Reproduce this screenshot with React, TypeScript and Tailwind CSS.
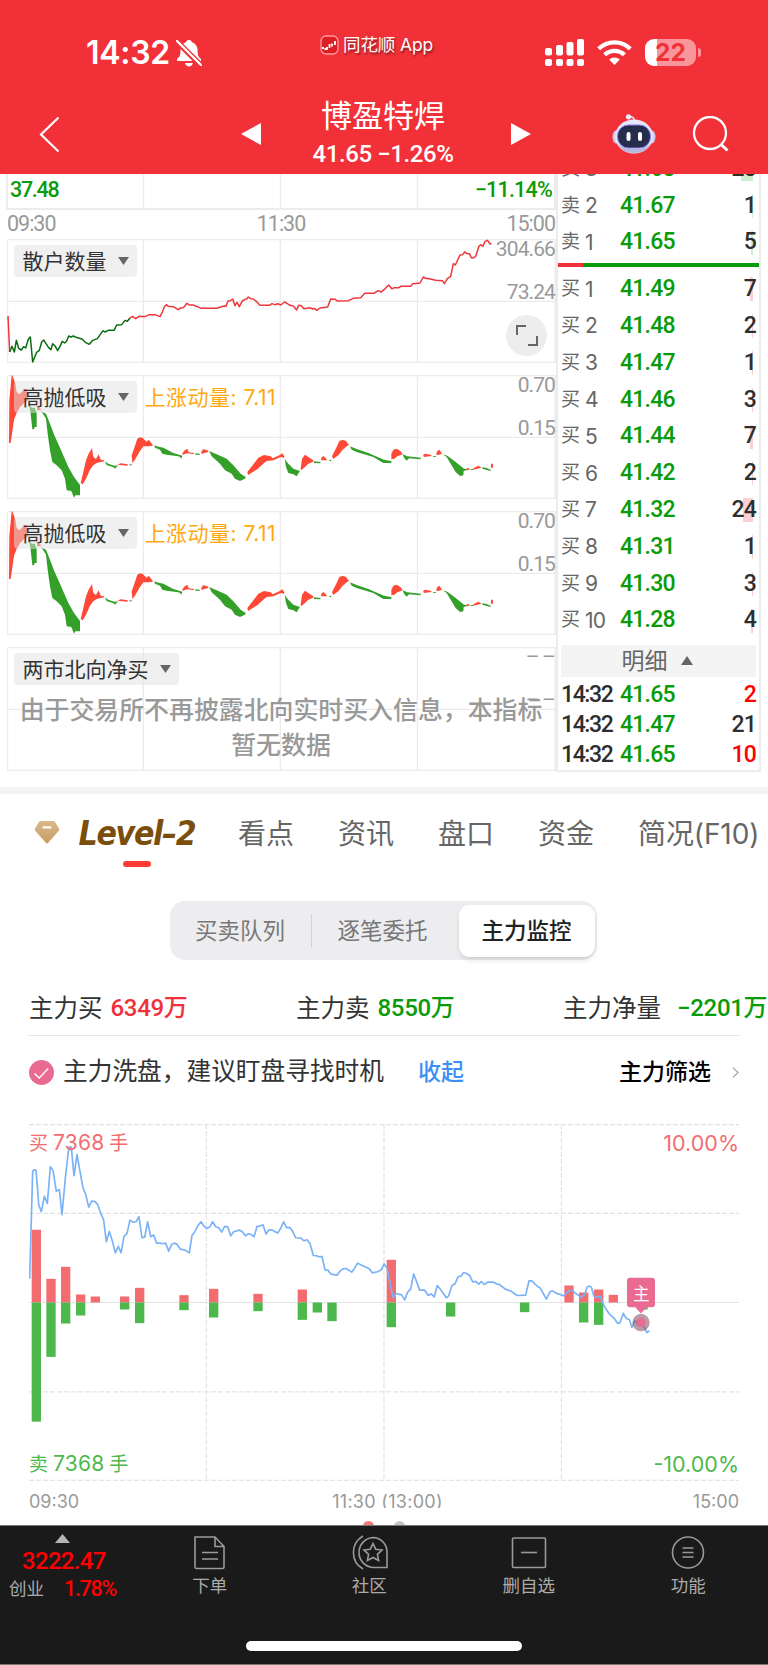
import type { ReactNode } from 'react'

const din = "font-[family-name:Roboto,'Noto_Sans_CJK_SC',sans-serif]"
const sans = "font-[family-name:Inter,'Noto_Sans_CJK_SC',sans-serif]"

interface Quote { label: string; level: number; price: string; qty: string; depth: number }

const asks: Quote[] = [
  { label: '卖', level: 3, price: '41.68', qty: '28', depth: 12 },
  { label: '卖', level: 2, price: '41.67', qty: '1', depth: 1 },
  { label: '卖', level: 1, price: '41.65', qty: '5', depth: 2 },
]

const bids: Quote[] = [
  { label: '买', level: 1, price: '41.49', qty: '7', depth: 3 },
  { label: '买', level: 2, price: '41.48', qty: '2', depth: 1 },
  { label: '买', level: 3, price: '41.47', qty: '1', depth: 1 },
  { label: '买', level: 4, price: '41.46', qty: '3', depth: 1 },
  { label: '买', level: 5, price: '41.44', qty: '7', depth: 3 },
  { label: '买', level: 6, price: '41.42', qty: '2', depth: 1 },
  { label: '买', level: 7, price: '41.32', qty: '24', depth: 10 },
  { label: '买', level: 8, price: '41.31', qty: '1', depth: 1 },
  { label: '买', level: 9, price: '41.30', qty: '3', depth: 1 },
  { label: '买', level: 10, price: '41.28', qty: '4', depth: 2 },
]

const trades = [
  { time: '14:32', price: '41.65', qty: '2', color: 'text-[#ff0000]' },
  { time: '14:32', price: '41.47', qty: '21', color: 'text-[#2e2e2e]' },
  { time: '14:32', price: '41.65', qty: '10', color: 'text-[#ff0000]' },
]

// [x, top of buy bar, bottom of sell bar], zero line is 608
const bars = [
  [95, 390, 965], [139, 537, 771], [183, 501, 671], [228, 584, 647], [272, 590, 608],
  [360, 590, 629], [405, 564, 670], [538, 586, 631], [627, 567, 653], [760, 582, 634],
  [893, 569, 660], [938, 608, 638], [982, 608, 664], [1160, 480, 682], [1338, 608, 650],
  [1560, 608, 637], [1693, 557, 608], [1737, 578, 668], [1782, 569, 675], [1826, 585, 608],
  [1915, 608, 629],
]

const priceLine =
  '89,537 98,214 103,210 108,212 113,270 116,315 124,336 133,290 142,311 151,201 159,212 169,275 178,269 186,345 196,235 205,155 210,141 214,143 222,228 231,165 240,215 249,265 257,283 266,322 275,304 284,305 293,314 302,340 311,361 319,426 328,395 337,424 346,459 355,440 363,459 372,410 381,401 390,361 399,367 408,366 417,351 426,414 434,412 443,366 452,411 461,406 470,430 480,430 488,432 497,430 506,454 515,434 522,430 530,433 541,448 555,451 568,459 576,407 585,395 593,379 603,366 613,380 620,386 629,382 638,366 647,381 656,384 665,397 674,380 683,381 692,408 701,396 718,391 727,396 736,408 745,402 753,404 762,411 771,380 780,379 789,375 798,403 807,390 816,391 833,400 842,386 851,366 860,384 869,383 878,394 887,414 903,415 912,423 921,420 930,431 940,467 949,468 957,471 966,470 975,510 984,511 993,523 1011,526 1020,514 1029,507 1038,506 1055,517 1064,505 1073,490 1082,495 1108,507 1117,519 1133,516 1144,510 1152,492 1161,505 1170,549 1179,594 1188,581 1205,585 1214,600 1223,577 1232,568 1241,522 1259,571 1274,571 1285,587 1294,582 1303,591 1312,557 1321,568 1339,594 1346,588 1356,557 1365,552 1374,531 1383,529 1391,518 1400,521 1409,527 1418,546 1427,545 1436,553 1444,545 1453,554 1463,547 1480,547 1489,552 1498,554 1516,568 1533,574 1551,587 1577,586 1587,543 1595,543 1613,560 1621,565 1639,598 1650,576 1657,573 1668,580 1691,588 1709,572 1718,572 1727,581 1744,592 1753,585 1762,561 1769,559 1774,562 1782,589 1791,593 1800,589 1812,618 1827,641 1844,657 1853,671 1860,669 1870,640 1879,656 1888,659 1896,683 1905,662 1914,676 1922,661 1931,680 1941,698 1948,692'

const retailGreen =
  '29,545 36,528 43,545 49,510 56,534 64,539 71,529 77,533 85,507 91,500 98,575 110,546 118,540 125,515 131,509 138,520 146,532 153,538 158,520 166,528 173,541 180,528 187,513 194,518 200,512 206,497 213,500 220,497 228,501 246,506 256,516 268,522 278,510 292,505 309,481 315,485 325,480 342,480 350,464 365,463 375,450 382,453 390,443'

const retailRed =
  '390,443 397,438 407,445 417,438 435,439 448,433 465,433 480,439 487,425 494,408 499,403 505,408 520,409 534,418 542,413 550,412 561,399 568,404 580,404 604,414 650,414 672,407 678,408 684,392 691,391 698,386 705,406 711,396 718,409 727,392 735,387 740,386 745,380 752,385 760,386 770,394 780,405 808,405 816,400 824,403 834,400 842,404 854,395 862,400 870,405 880,407 890,419 896,405 904,406 912,415 930,412 938,416 943,414 950,420 960,413 983,410 992,386 1006,387 1012,392 1045,391 1060,384 1082,382 1094,369 1122,369 1134,361 1144,365 1152,358 1166,344 1176,356 1182,352 1197,352 1202,348 1232,348 1238,340 1260,338 1270,320 1277,324 1287,325 1307,330 1327,331 1333,340 1342,325 1352,318 1360,280 1366,284 1380,254 1388,253 1394,245 1402,250 1408,250 1414,262 1420,263 1427,258 1437,228 1442,223 1449,228 1455,213 1462,210 1470,220 1475,220'

const swingRed = [
  '27,818 28,690 35,614 38,617 46,640 50,665 58,672 66,665 72,655 80,656 84,690 70,700 60,710 50,728 42,748 36,790 32,818',
  '110,705 118,712 124,720 112,720',
  '242,938 250,905 258,870 266,850 276,833 280,860 288,866 296,852 302,868 312,870 312,873 290,878 280,885 270,898 258,925 248,942',
  '355,882 362,879 383,882 383,886 355,884',
  '395,855 402,835 412,805 420,801 428,803 440,814 446,808 458,823 458,826 445,828 430,828 418,845 405,868 397,878',
  '547,850 552,842 562,835 566,846 582,848 582,851 560,849 548,854',
  '603,846 610,836 625,841 625,845 605,850',
  '742,905 760,882 775,862 792,854 812,858 818,864 838,855 847,849 854,860 852,862 842,860 820,870 800,872 790,880 770,898 744,914',
  '902,895 906,865 915,853 925,860 940,870 940,874 925,880 915,890 903,900',
  '963,870 964,862 971,857 980,867 980,870',
  '996,858 1010,830 1018,812 1028,808 1038,812 1047,824 1040,828 1028,838 1015,855 1000,866',
  '1174,850 1180,838 1190,835 1202,843 1208,852 1192,858 1182,866 1174,866',
  '1269,853 1277,850 1294,854 1294,857 1272,860',
  '1309,850 1312,842 1318,838 1326,851 1310,855',
  '1398,896 1404,893 1412,897 1400,900',
  '1420,894 1435,886 1445,892 1420,898',
  '1473,880 1479,880 1479,892 1473,892',
]

const swingGreen = [
  '88,705 96,712 104,712 110,727 110,770 104,770 102,777 97,777 92,730',
  '122,722 138,730 150,760 163,795 178,828 192,860 205,890 222,920 240,944 240,975 226,975 222,982 214,962 200,960 195,925 185,900 170,885 157,875 150,840 143,790 138,745 130,732',
  '314,873 325,880 343,886 354,885 345,895 340,891 320,884',
  '388,882 396,882 396,885 388,885',
  '463,824 470,828 490,832 520,848 547,856 545,864 535,858 500,853 487,850 480,838 465,832',
  '586,849 600,850 600,853 586,853',
  '627,842 650,852 680,865 700,885 722,910 737,920 735,925 720,932 705,925 695,910 675,900 660,880 635,858',
  '854,866 865,880 880,895 900,902 890,918 880,912 865,908 858,890',
  '942,873 962,875 960,879 942,878',
  '985,868 995,869 992,873',
  '1050,828 1070,836 1105,848 1152,868 1174,872 1174,878 1150,878 1120,860 1070,845 1055,838',
  '1208,852 1222,858 1262,862 1262,867 1227,864 1220,871 1212,862',
  '1297,857 1309,857 1305,861',
  '1328,852 1342,856 1367,875 1392,895 1400,897 1400,900 1391,902 1390,915 1380,917 1367,905 1352,880 1340,860',
  '1412,896 1420,896 1420,899 1412,899',
  '1447,891 1460,893 1472,898 1472,902 1447,895',
]

function Grid({ top }: { top: number }) {
  return (
    <g stroke="#ececec" strokeWidth="4" fill="none">
      <path d={`M22 ${top + 1}H1666V${top + 371}H22Z`} strokeWidth="5" />
      <path d={`M430 ${top}v372M841 ${top}v372M1252 ${top}v372M22 ${top + 187}H1666`} />
    </g>
  )
}

function Panel({ top, chart, children }: { top: number; chart?: ReactNode; children: ReactNode }) {
  return (
    <section className="relative mb-[12px] ml-[7px] h-[124px] w-[549px]">
      <svg className="absolute inset-0 h-full w-full" viewBox={`21 ${top} 1647 372`} preserveAspectRatio="none">
        <Grid top={top} />
        {chart}
      </svg>
      <div className="relative h-full">{children}</div>
    </section>
  )
}

function Pill({ text }: { text: string }) {
  return (
    <button className="flex h-8 items-center gap-[11px] rounded bg-[#e2e2e2]/50 pr-2 pl-[9px] text-[21px] leading-none text-[#333]">
      {text}
      <svg className="h-[8px] w-[11px]" viewBox="0 0 11 8"><path d="M0 0h11L5.500 8z" fill="#666" /></svg>
    </button>
  )
}

function AxisValues({ values }: { values: string[] }) {
  return (
    <div className={`${din} absolute top-[-5px] right-px flex flex-col items-end gap-[13px] text-[21px] leading-[30px] tracking-[-0.9px] text-[#999]`}>
      {values.map((v, i) => <span key={i}>{v}</span>)}
    </div>
  )
}

function SwingPanel() {
  return (
    <Panel
      top={614}
      chart={
        <>
          {swingRed.map(p => <polygon key={p} points={p} fill="#ff4836" />)}
          {swingGreen.map(p => <polygon key={p} points={p} fill="#349f29" />)}
        </>
      }
    >
      <div className="flex items-center gap-2 pt-[6px] pl-[6.5px]">
        <Pill text="高抛低吸" />
        <span className="text-[21px] leading-none tracking-[0.5px] text-[#ffa80f]">上涨动量: 7.11</span>
      </div>
      <AxisValues values={['0.70', '0.15']} />
    </Panel>
  )
}

function QuoteRow({ q, side }: { q: Quote; side: 'ask' | 'bid' }) {
  return (
    <div className="flex h-[36.8px] shrink-0 items-center pr-[3px] pl-[3px]">
      <span className="flex w-[59px] items-center gap-[5px] text-[19px] text-[#666]">
        {q.label}
        <b className="text-[21px] font-normal tracking-[-0.8px]">{q.level}</b>
      </span>
      <span className={`${din} flex-1 text-[23px] font-medium tracking-[-0.8px] text-[#0a9b0a]`}>{q.price}</span>
      <span className="relative">
        <i
          className={`absolute top-1/2 right-[3px] h-6 -translate-y-1/2 ${side === 'ask' ? 'bg-[#cdeecd]' : 'bg-[#fbd0d2]'}`}
          style={{ width: q.depth }}
        />
        <span className={`${din} relative text-[23px] font-medium tracking-[-0.8px] text-[#2e2e2e]`}>{q.qty}</span>
      </span>
    </div>
  )
}

function Header() {
  return (
    <header className="relative z-10 h-[174px] bg-[#f23038] text-white">
      <div className="flex h-[98px] items-center">
        <span className="ml-[86px] w-[90px] pt-[7px] text-[32px] leading-none font-semibold tracking-[-0.3px]">14:32</span>
        <svg className="mt-[7px] h-[28px] w-[26px]" viewBox="0 0 26 28">
          <path d="M13 1c1.700 0 2.800 1 3 2.300 3.800 1.300 5.600 4.500 5.600 8.200 0 5 1 6.500 3.400 8.500v2H1v-2c2.500-2 3.500-3.500 3.500-8.500C4.500 7.800 6.200 4.600 10 3.300 10.200 2 11.300 1 13 1zM9 24h8c-.5 2-2 3.400-4 3.400S9.500 26 9 24z" fill="#fff" />
          <path d="M0 1.500l26 26" stroke="#f23038" strokeWidth="5.500" />
          <path d="M1 2l24 24" stroke="#fff" strokeWidth="2.300" strokeLinecap="round" />
        </svg>
        <div className="mb-[8px] ml-[118px] flex w-[122px] items-center gap-1">
          <svg className="h-[20px] w-[19px] shrink-0" viewBox="0 0 19 20">
            <rect x="1" y="1" width="17" height="18" rx="5" fill="#dc1f26" stroke="#ff9a9a" strokeWidth="1.300" />
            <path d="M2 13h2M4.500 14h2M7 12v3M9.500 9v4M12 8.500v3M15 6v4" stroke="#fff" strokeWidth="1.800" fill="none" />
          </svg>
          <span className="text-[17.5px] leading-[26px] tracking-[-0.1px] whitespace-nowrap [text-shadow:1px_2px_2px_rgba(0,0,0,0.45)]">同花顺 App</span>
        </div>
        <div className="mt-[6px] ml-[103px] flex items-center">
          <svg className="h-[27px] w-[39px]" viewBox="0 0 39 27" fill="#fff">
            <rect y="9" width="7" height="7.500" rx="2" />
            <rect x="11" y="6" width="7" height="10.500" rx="2" />
            <rect x="21.500" y="3" width="7" height="13.500" rx="2" />
            <rect x="32" width="7" height="16.500" rx="2" />
            <rect y="20" width="7" height="7" rx="2" />
            <rect x="11" y="20" width="7" height="7" rx="2" />
            <rect x="21.500" y="20" width="7" height="7" rx="2" />
            <rect x="32" y="20" width="7" height="7" rx="2" />
          </svg>
          <svg className="ml-[13px] h-[25px] w-[35px]" viewBox="0 0 35 25" fill="none" stroke="#fff" strokeWidth="4.200">
            <path d="M1.700 8.800a22.500 22.500 0 0 1 31.600 0" />
            <path d="M7.600 14.800a14.200 14.200 0 0 1 19.800 0" />
            <path d="M17.500 25l-5.300-5.400a7.600 7.600 0 0 1 10.600 0z" fill="#fff" stroke="none" />
          </svg>
          <div className="ml-[13px] flex h-[27px] w-[51px] items-center justify-center rounded-[9px] bg-linear-to-r from-white from-[23%] to-[#f8969b] to-[23%] text-[24.500px] leading-[27px] font-bold text-[#f23038]">
            22
          </div>
          <i className="ml-[1.5px] h-[9px] w-[3.500px] rounded-r-full bg-[#f8969b]" />
        </div>
      </div>
      <div className="flex h-[76px] items-start">
        <svg className="mt-[18px] ml-[39px] h-[37px] w-[21px]" viewBox="0 0 21 37"><path d="M19.500 1.500L2 18.500l17.500 17" stroke="#fff" strokeWidth="2.200" fill="none" /></svg>
        <svg className="mt-[25px] ml-[181px] h-[22px] w-5" viewBox="0 0 20 22"><path d="M20 0v22L0 11z" fill="#fff" /></svg>
        <div className="ml-[36px] flex w-[172px] flex-col items-center">
          <h1 className="-mt-px text-[31px] leading-[38px] whitespace-nowrap">博盈特焊</h1>
          <p className={`${din} mt-px text-[24px] leading-[36px] font-medium tracking-[-0.4px] whitespace-nowrap`}>41.65 −1.26%</p>
        </div>
        <svg className="mt-[25px] ml-[42px] h-[22px] w-5" viewBox="0 0 20 22"><path d="M0 0v22l20-11z" fill="#fff" /></svg>
        <svg className="mt-[16px] ml-[81px] h-[40px] w-[44px]" viewBox="0 0 44 40">
          <circle cx="16.500" cy="2.800" r="2.600" fill="#e9ecfb" />
          <path d="M17 2.500q5 0 5.500 4" stroke="#e9ecfb" strokeWidth="1.600" fill="none" />
          <ellipse cx="4" cy="23" rx="3.500" ry="6.500" fill="#c9cdf0" />
          <ellipse cx="40" cy="23" rx="3.500" ry="6.500" fill="#c9cdf0" />
          <ellipse cx="22" cy="22.500" rx="19" ry="17" fill="#e6e8fa" />
          <path d="M5 29q5 10 17 10t17-10q-6 6-17 6T5 29z" fill="#b6b9de" />
          <rect x="5.500" y="11" width="33" height="23" rx="11" fill="#262c4c" stroke="#8f7ff0" />
          <rect x="14.500" y="18" width="4" height="9" rx="2" fill="#fff" />
          <rect x="26" y="18" width="4" height="9" rx="2" fill="#fff" />
        </svg>
        <svg className="mt-[18px] ml-[36px] h-[37px] w-[37px]" viewBox="0 0 37 37" fill="none" stroke="#fff" strokeWidth="2.300">
          <circle cx="18" cy="17" r="16" />
          <path d="M28.500 28l7 6.500" strokeWidth="3" />
        </svg>
      </div>
    </header>
  )
}

function Charts() {
  return (
    <div className="w-[556px]">
      <div className="relative ml-[6px] flex h-[36px] w-[550px] justify-between border-x-2 border-b-2 border-[#ececec]">
        <svg className="absolute inset-0 h-full w-full" viewBox="0 0 546 34" preserveAspectRatio="none">
          <path d="M135.500 0v34M272.500 0v34M409.500 0v34" stroke="#ececec" strokeWidth="1.300" />
        </svg>
        <span className={`${din} relative pl-[2px] text-[21.5px] leading-[32px] font-medium tracking-[-1.3px] text-[#0a9b0a]`}>37.48</span>
        <span className={`${din} relative pr-[2px] text-[21.5px] leading-[32px] font-medium tracking-[-0.8px] text-[#0a9b0a]`}>−11.14%</span>
      </div>
      <div className={`${din} flex h-[29px] items-center justify-between pr-px pl-[7px] text-[21.5px] tracking-[-1px] text-[#999]`}>
        <span>09:30</span>
        <span>11:30</span>
        <span>15:00</span>
      </div>
      <Panel
        top={206}
        chart={
          <g fill="none" strokeWidth="4.500" strokeLinejoin="round">
            <polyline points="24,437 29,545" stroke="#f0353b" />
            <polyline points={retailGreen} stroke="#0b6b10" />
            <polyline points={retailRed} stroke="#f0353b" />
          </g>
        }
      >
        <div className="flex pt-[6px] pl-[6.5px]"><Pill text="散户数量" /></div>
        <AxisValues values={['304.66', '73.24']} />
        <button className="absolute right-[9px] bottom-[7px] flex size-[41px] items-center justify-center rounded-full bg-[#ededed]">
          <svg className="h-[21px] w-[22px]" viewBox="0 0 22 21" fill="none" stroke="#666" strokeWidth="2"><path d="M1 10V1h9M21 11v9h-9" /></svg>
        </button>
      </Panel>
      <SwingPanel />
      <SwingPanel />
      <Panel top={614}>
        <div className="flex pt-[6px] pl-[6.5px]"><Pill text="两市北向净买" /></div>
        <AxisValues values={['–\u2009–', '–\u2009–']} />
        <p className="mt-[8px] pr-px text-center text-[24.9px] leading-[34.5px] font-medium whitespace-nowrap text-[#999]">
          由于交易所不再披露北向实时买入信息，本指标<br />暂无数据
        </p>
      </Panel>
    </div>
  )
}

function OrderBook() {
  return (
    <div className="flex h-[598px] w-[205px] flex-col border-x-2 border-b-2 border-[#ececec]">
      <div className="flex h-[89px] shrink-0 flex-col justify-end overflow-hidden pb-[2px]">
        {asks.map(q => <QuoteRow key={q.level} q={q} side="ask" />)}
      </div>
      <div className="flex h-[4px] shrink-0">
        <i className="w-[25px] bg-[#f23038]" />
        <i className="flex-1 bg-[#0a9b0a]" />
      </div>
      <div className="shrink-0 pt-[4px]">
        {bids.map(q => <QuoteRow key={q.level} q={q} side="bid" />)}
      </div>
      <div className="mx-[3px] mt-[6px] flex h-8 shrink-0 items-center justify-center gap-[13px] bg-[#f4f4f4] pr-[3px] text-[23px] text-[#666]">
        明细
        <svg className="h-[9px] w-3" viewBox="0 0 12 9"><path d="M0 9h12L6 0z" fill="#666" /></svg>
      </div>
      <div className={`${din} mt-[3px] shrink-0 text-[23px] font-medium tracking-[-0.8px]`}>
        {trades.map((t, i) => (
          <div key={i} className="flex h-[30.3px] items-center px-[3px]">
            <span className="w-[59px] tracking-[-1.400px] text-[#2e2e2e]">{t.time}</span>
            <span className="flex-1 text-[#0a9b0a]">{t.price}</span>
            <span className={t.color}>{t.qty}</span>
          </div>
        ))}
      </div>
    </div>
  )
}

function Tabs() {
  return (
    <nav className="flex h-[80px] items-start pt-[18px] text-[28px] leading-[44px] whitespace-nowrap text-[#666]">
      <svg className="mt-[9px] ml-[34px] h-[23px] w-[26px]" viewBox="0 0 26 23">
        <defs>
          <linearGradient id="gem" x1="0" y1="0" x2="0" y2="1">
            <stop offset="0" stopColor="#d9b98a" />
            <stop offset="1" stopColor="#c89d62" />
          </linearGradient>
        </defs>
        <path d="M6.500 0h13q1 0 1.500.8l4 7q.6 1-.2 2L14 22q-1 1-2 0L1.200 9.800q-.8-1-.2-2l4-7Q5.500 0 6.500 0z" fill="url(#gem)" />
        <rect x="8.500" y="5.300" width="9" height="2.300" rx="1" fill="#fff" />
      </svg>
      <div className="ml-[16px] flex w-[122px] flex-col items-center">
        <span className="font-[family-name:'DejaVu_Sans_Condensed','DejaVu_Sans',sans-serif] text-[33.500px] font-bold tracking-[-1.300px] text-[#7a4f0e] italic">Level–2</span>
        <i className="mt-[5px] h-[6px] w-[28px] rounded-full bg-[#ff3b33]" />
      </div>
      <span className="ml-[40px] w-[100px]">看点</span>
      <span className="w-[100px]">资讯</span>
      <span className="w-[100px]">盘口</span>
      <span className="w-[100px]">资金</span>
      <span className="tracking-[-0.1px]">简况(F10)</span>
    </nav>
  )
}

function MoneyFlow() {
  return (
    <div className="relative ml-[29px] h-[357px] w-[710px]">
      <svg className="absolute inset-0 h-full w-full" viewBox="87 73 2130 1070" preserveAspectRatio="none">
        <g stroke="#e3e3e3" strokeWidth="3.500" fill="none" strokeDasharray="15 6">
          <path d="M87 75H2217M87 341H2217M87 876H2217M87 1141H2217M619 73V1142M1152 73V1142M1684 73V1142" />
          <path d="M87 608H2217" strokeDasharray="none" />
        </g>
        {bars.map(([x, up, down]) => (
          <g key={x}>
            <rect x={x} y={up} width="28" height={608 - up} fill="#f36d70" />
            <rect x={x} y={608} width="28" height={down - 608} fill="#4db84c" />
          </g>
        ))}
        <polyline points={priceLine} fill="none" stroke="#7ab2f7" strokeWidth="5" strokeLinejoin="round" />
        <circle cx="1923" cy="668" r="26" fill="#8a5a6e" fillOpacity="0.6" />
        <circle cx="1923" cy="668" r="14" fill="#ea6b92" />
        <path d="M1890 534h66q9 0 9 9v70q0 9-9 9h-16l-17 19-17-19h-16q-9 0-9-9v-70q0-9 9-9z" fill="#ea6b92" />
      </svg>
      <span className="absolute top-[158px] left-[604px] text-[16.500px] leading-[24px] text-white">主</span>
      <div className="relative flex h-full flex-col justify-between pt-[3.5px] pb-px text-[19px] leading-[30px]">
        <div className="flex justify-between text-[#f36d70]">
          <span>买<b className="mx-[5px] text-[21px] font-normal tracking-[0.2px]">7368</b>手</span>
          <span className="text-[21.500px]">10.00%</span>
        </div>
        <div className="flex justify-between text-[#4db84c]">
          <span>卖<b className="mx-[5px] text-[21px] font-normal tracking-[0.2px]">7368</b>手</span>
          <span className="text-[21.500px]">-10.00%</span>
        </div>
      </div>
    </div>
  )
}

function FooterItem({ label, children }: { label: string; children: ReactNode }) {
  return (
    <button className="flex w-[159.5px] flex-col items-center pt-[8px] text-[17.5px] leading-[32px] text-[#aaa]">
      <svg className="h-[36px] w-[38px]" viewBox="0 0 38 36" fill="none" stroke="#9a9a9a" strokeWidth="1.600">{children}</svg>
      {label}
    </button>
  )
}

export default function App() {
  return (
    <div className={`${sans} h-[1665px] w-[768px] overflow-hidden bg-white`}>
      <Header />
      <div className="flex h-[613px] w-[768px]">
        <Charts />
        <OrderBook />
      </div>
      <div className="h-[7px] bg-[#f3f3f3]" />
      <Tabs />
      <div className="mt-[27px] ml-[170px] flex h-[59px] w-[427px] items-center rounded-[15px] bg-[#ededf0] text-[22.5px] text-[#777]">
        <span className="w-[141px] pr-px text-center">买卖队列</span>
        <i className="h-[33px] w-px bg-[#d2d2d6]" />
        <span className="mr-[6px] w-[141px] text-center">逐笔委托</span>
        <span className="flex h-[52px] w-[136px] items-center justify-center rounded-[11px] bg-white pr-px font-medium text-[#222] shadow-md">主力监控</span>
      </div>
      <div className="ml-[29px] flex h-[75px] w-[739px] items-center pt-[21px] text-[24.500px] whitespace-nowrap text-[#333]">
        <div className="flex w-[267px] shrink-0 items-center gap-[8px]">
          主力买<span className={`${din} text-[24px] font-medium tracking-[-0.3px] text-[#f0303a]`}>6349万</span>
        </div>
        <div className="flex w-[267px] shrink-0 items-center gap-[8px]">
          主力卖<span className={`${din} text-[24px] font-medium tracking-[-0.3px] text-[#0a9b0a]`}>8550万</span>
        </div>
        <div className="flex items-center gap-[16px]">
          主力净量<span className={`${din} text-[24px] font-medium tracking-[-0.3px] text-[#0a9b0a]`}>−2201万</span>
        </div>
      </div>
      <div className="mx-[29px] flex h-[73px] items-center border-t border-[#e8e8e8] text-[24.700px] whitespace-nowrap text-[#333]">
        <svg className="mr-[9px] size-[25px]" viewBox="0 0 25 25">
          <circle cx="12.500" cy="12.500" r="12.500" fill="#ea6b92" />
          <path d="M5.500 13.500l4.700 4.500 9-9.500" stroke="#fff" strokeWidth="1.400" fill="none" />
        </svg>
        主力洗盘，建议盯盘寻找时机
        <span className="ml-[34px] text-[23px] font-medium text-[#3d8ff5]">收起</span>
        <span className="ml-auto text-[23px] font-medium text-black">主力筛选</span>
        <svg className="ml-[21px] h-[11px] w-[7px]" viewBox="0 0 7 11"><path d="M1 .7l5 4.800-5 4.800" stroke="#aaa" fill="none" strokeWidth="1.300" /></svg>
      </div>
      <div className="h-[16px]" />
      <MoneyFlow />
      <div className="mx-[29px] flex h-[27px] items-end justify-between overflow-hidden text-[18px] leading-[13px] text-[#999]">
        <span>09:30</span>
        <span className="pl-[3px] tracking-[0.3px]">11:30 (13:00)</span>
        <span>15:00</span>
      </div>
      <div className="flex h-[17px] items-end overflow-hidden pl-[363px]">
        <i className="mr-[20px] -mb-[7px] size-[11px] shrink-0 rounded-full bg-[#f0787c]" />
        <i className="-mb-[7px] size-[11px] shrink-0 rounded-full bg-[#c4c4c4]" />
      </div>
      <footer className="relative h-[140px] border-t border-b border-[#777] bg-[#1a1a1a]">
        <div className="flex">
          <div className="flex w-[130px] flex-col items-start pt-[8px]">
            <svg className="ml-[55px] h-[9px] w-[15px]" viewBox="0 0 15 9"><path d="M0 9h15L7.500 0z" fill="#b5b5b5" /></svg>
            <span className={`${din} ml-[22px] text-[24px] leading-[36px] font-medium tracking-[-0.7px] text-[#ff0000]`}>3222.47</span>
            <div className="ml-[9px] flex items-center gap-[20px] text-[17.5px] leading-[20px] text-[#aaa]">
              创业<span className={`${din} text-[21.500px] font-medium tracking-[-1.300px] text-[#ff0000]`}>1.78%</span>
            </div>
          </div>
          <FooterItem label="下单">
            <path d="M4 3h20l9 9.500V33q0 1.500-1.500 1.500H5.500Q4 34.500 4 33zM24 3v9.500h9M11 18.500h16M11 25h16" />
          </FooterItem>
          <FooterItem label="社区">
            <path d="M13 2a19 19 0 0 0 0 33M24 3.500a14.500 14.500 0 1 0 0 30h13V18A14.500 14.500 0 0 0 24 3.500z" />
            <path d="M23 9.500l2.700 5.700 6.300.8-4.600 4.300 1.200 6.200-5.600-3-5.600 3 1.200-6.200L14 16l6.300-.8z" />
          </FooterItem>
          <FooterItem label="删自选">
            <rect x="2.500" y="4" width="33" height="29.500" rx="1" />
            <path d="M11 18.500h16" />
          </FooterItem>
          <FooterItem label="功能">
            <circle cx="19" cy="18.500" r="15.500" />
            <path d="M13.500 14h11M13.500 18.500h11M13.500 23h11" />
          </FooterItem>
        </div>
        <i className="absolute bottom-[13px] left-[246px] h-[10px] w-[276px] rounded-full bg-white" />
      </footer>
    </div>
  )
}
